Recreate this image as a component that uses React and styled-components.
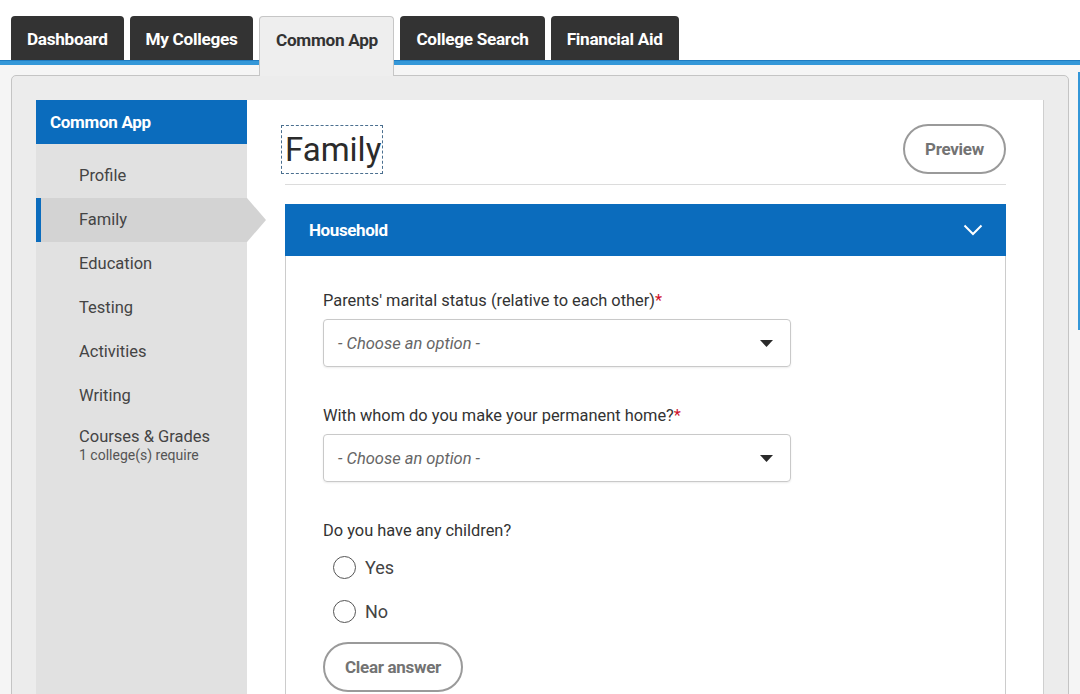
import React from "react";
import styled, { createGlobalStyle } from "styled-components";

const Global = createGlobalStyle`
  html, body { margin: 0; padding: 0; }
  body {
    font-family: Roboto, "Liberation Sans", Arial, sans-serif;
    background: #f5f5f5;
    color: #333;
    overflow: hidden;
  }
`;

const Page = styled.div`
  position: relative;
  width: 1080px;
  height: 694px;
  overflow: hidden;
  background: #f5f5f5;
`;

const TabBar = styled.div`
  display: flex;
  align-items: flex-start;
  gap: 6px;
  padding: 16px 0 0 11px;
  height: 45px;
  background: #fff;
  border-bottom: 4px solid #3497d8;
  box-shadow: inset 0 -1px 0 #1f7cc1;
`;

const Tab = styled.div`
  position: relative;
  z-index: 2;
  box-sizing: border-box;
  height: ${(p) => (p.$active ? "60px" : "44px")};
  padding: 13px ${(p) => (p.$active ? "15.5px" : "16px")} 0;
  display: flex;
  align-items: flex-start;
  border-radius: 4px 4px 0 0;
  background: ${(p) => (p.$active ? "#eeeeee" : "#333333")};
  border: ${(p) => (p.$active ? "1px solid #c6c6c6" : "none")};
  border-bottom: none;
  color: ${(p) => (p.$active ? "#333" : "#fff")};
  font-weight: 700;
  font-size: 17.2px;
  letter-spacing: -0.3px;
  line-height: 20px;
  white-space: nowrap;
`;

const Main = styled.div`
  padding: 10px 11px 0 11px;
`;

const Panel = styled.div`
  box-sizing: border-box;
  height: 700px;
  background: #ececec;
  border: 1px solid #c4c4c4;
  border-radius: 5px;
  padding: 24px 24px 0 24px;
`;

const Card = styled.div`
  display: flex;
  height: 700px;
  background: #fff;
  border-right: 1px solid #cfcfcf;
`;

const Sidebar = styled.nav`
  width: 211px;
  flex-shrink: 0;
  background: #e1e1e1;
  padding-bottom: 20px;
`;

const SideHeader = styled.div`
  height: 44px;
  display: flex;
  align-items: center;
  padding-left: 14px;
  background: #0b6cbd;
  color: #fff;
  font-weight: 700;
  font-size: 17px;
  letter-spacing: -0.3px;
  margin-bottom: 10px;
`;

const SideItem = styled.div`
  position: relative;
  box-sizing: border-box;
  min-height: 44px;
  display: flex;
  flex-direction: column;
  justify-content: ${(p) => (p.$stacked ? "flex-start" : "center")};
  padding-top: ${(p) => (p.$stacked ? "9px" : "0")};
  padding-left: 43px;
  color: #444;
  font-size: 16.5px;
  line-height: 20px;
  background: ${(p) => (p.$active ? "#d3d3d3" : "transparent")};
  box-shadow: ${(p) => (p.$active ? "inset 5px 0 0 #0b6cbd" : "none")};
  ${(p) =>
    p.$active &&
    `
    &::after {
      content: "";
      position: absolute;
      right: -19px;
      top: 0;
      border-top: 22px solid transparent;
      border-bottom: 22px solid transparent;
      border-left: 19px solid #d3d3d3;
    }
  `}
`;

const SubText = styled.span`
  font-size: 14px;
  color: #555;
  line-height: 16px;
`;

const Content = styled.section`
  flex: 1;
  padding: 24px 37px 0 38px;
`;

const HeaderRow = styled.div`
  display: flex;
  align-items: center;
  justify-content: space-between;
  padding-bottom: 10px;
  border-bottom: 1px solid #dcdcdc;
`;

const Title = styled.h1`
  margin: 0 0 0 -3px;
  padding: 0 1px 0 3px;
  font-size: 33px;
  font-weight: 400;
  line-height: 47px;
  color: #2b2b2b;
  outline: 1px dashed #4a6f8f;
`;

const PillButton = styled.button`
  box-sizing: border-box;
  height: 50px;
  width: ${(p) => p.$width}px;
  border: 2px solid #9a9a9a;
  border-radius: 25px;
  background: #fff;
  color: #737373;
  font-family: Roboto, "Liberation Sans", Arial, sans-serif;
  font-weight: 700;
  font-size: 17px;
  letter-spacing: -0.3px;
  padding: 0;
`;

const Section = styled.div`
  margin-top: 19px;
`;

const SectionHeader = styled.div`
  height: 52px;
  display: flex;
  align-items: center;
  justify-content: space-between;
  padding: 0 23px 0 24px;
  background: #0b6cbd;
  color: #fff;
  font-weight: 700;
  font-size: 17px;
  letter-spacing: -0.4px;
`;

const SectionBody = styled.div`
  border: 1px solid #cccccc;
  border-top: none;
  padding: 33px 37px 40px 37px;
  height: 500px;
`;

const Field = styled.div`
  margin-bottom: 37px;
`;

const Label = styled.div`
  font-size: 16.4px;
  line-height: 24px;
  color: #333;
  margin-bottom: ${(p) => p.$gap ?? 6}px;
`;

const Req = styled.span`
  color: #d0102b;
`;

const Select = styled.div`
  box-sizing: border-box;
  width: 468px;
  height: 48px;
  display: flex;
  align-items: center;
  justify-content: space-between;
  padding: 0 17px 0 14px;
  border: 1px solid #c9c9c9;
  border-radius: 4px;
  box-shadow: 0 1px 2px rgba(0, 0, 0, 0.08);
  font-style: italic;
  font-size: 16.5px;
  color: #666;
`;

const RadioRow = styled.label`
  display: flex;
  align-items: center;
  height: 44px;
  padding-left: 10px;
  gap: 9px;
  font-size: 18px;
  color: #444;
`;

const RadioCircle = styled.span`
  box-sizing: border-box;
  width: 23px;
  height: 23px;
  border-radius: 50%;
  border: 1.5px solid #555;
  background: #fff;
`;

const ClearWrap = styled.div`
  margin-top: 9px;
`;

const ScrollHint = styled.div`
  position: absolute;
  right: 0;
  top: 72px;
  width: 2px;
  height: 258px;
  background: #3497d8;
`;

const Caret = () => (
  <svg width="13" height="7" viewBox="0 0 13 7">
    <polygon points="0,0 13,0 6.5,7" fill="#2a2a2a" />
  </svg>
);

const Chevron = () => (
  <svg width="20" height="12" viewBox="0 0 20 12">
    <polyline points="1.5,1.5 10,10 18.5,1.5" fill="none" stroke="#fff" strokeWidth="2" />
  </svg>
);

const tabs = ["Dashboard", "My Colleges", "Common App", "College Search", "Financial Aid"];
const nav = ["Profile", "Family", "Education", "Testing", "Activities", "Writing"];

export default function App() {
  return (
    <Page>
      <Global />
      <TabBar>
        {tabs.map((t) => (
          <Tab key={t} $active={t === "Common App"}>
            {t}
          </Tab>
        ))}
      </TabBar>
      <Main>
        <Panel>
          <Card>
            <Sidebar>
              <SideHeader>Common App</SideHeader>
              {nav.map((n) => (
                <SideItem key={n} $active={n === "Family"}>
                  {n}
                </SideItem>
              ))}
              <SideItem $stacked>
                <span>Courses &amp; Grades</span>
                <SubText>1 college(s) require</SubText>
              </SideItem>
            </Sidebar>
            <Content>
              <HeaderRow>
                <Title>Family</Title>
                <PillButton $width={103}>Preview</PillButton>
              </HeaderRow>
              <Section>
                <SectionHeader>
                  <span>Household</span>
                  <Chevron />
                </SectionHeader>
                <SectionBody>
                  <Field>
                    <Label>
                      Parents' marital status (relative to each other)<Req>*</Req>
                    </Label>
                    <Select>
                      <span>- Choose an option -</span>
                      <Caret />
                    </Select>
                  </Field>
                  <Field>
                    <Label>
                      With whom do you make your permanent home?<Req>*</Req>
                    </Label>
                    <Select>
                      <span>- Choose an option -</span>
                      <Caret />
                    </Select>
                  </Field>
                  <div>
                    <Label $gap={2}>Do you have any children?</Label>
                    <RadioRow>
                      <RadioCircle />
                      Yes
                    </RadioRow>
                    <RadioRow>
                      <RadioCircle />
                      No
                    </RadioRow>
                    <ClearWrap>
                      <PillButton $width={140}>Clear answer</PillButton>
                    </ClearWrap>
                  </div>
                </SectionBody>
              </Section>
            </Content>
          </Card>
        </Panel>
      </Main>
      <ScrollHint />
    </Page>
  );
}
